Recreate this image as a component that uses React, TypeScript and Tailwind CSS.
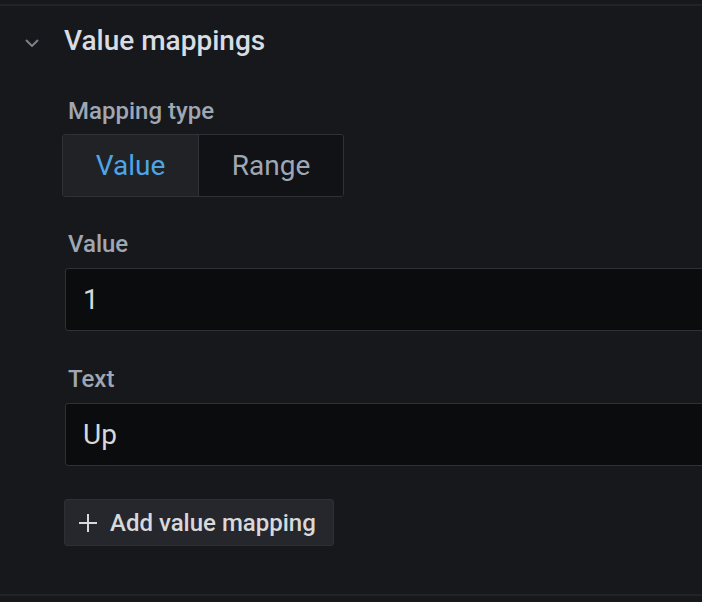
const font = { fontFamily: "Roboto, 'Noto Sans', Arial, sans-serif" };

function Field({ label, value }: { label: string; value: string }) {
  return (
    <div className="flex flex-col">
      <div className="pl-[3px] text-[24px] leading-[28px] font-medium text-[#9fa7b3]">{label}</div>
      <div className="mt-[10px] w-[700px] h-[63px] flex items-center pl-[17px] bg-[#0b0c0e] border border-[#2c3235] rounded-l-[3px] text-[28px] text-[#d8d9da]">
        {value}
      </div>
    </div>
  );
}

export default function App() {
  return (
    <div className="h-[602px] w-full bg-[#17181c] overflow-hidden flex flex-col" style={font}>
      <div className="h-[4px] shrink-0" />
      <div className="h-[2px] shrink-0 bg-[#222327]" />

      {/* header */}
      <div className="flex items-center pt-[19px] pl-[25px]">
        <svg width="14" height="8" viewBox="0 0 14 8" className="shrink-0 mt-[4px]">
          <path d="M1 1l6 6 6-6" fill="none" stroke="#7b8087" strokeWidth="2" />
        </svg>
        <div className="ml-[25px] text-[28px] leading-[32px] font-medium text-[#d8dce3]">Value mappings</div>
      </div>

      <div className="flex flex-col pl-[62px]">
        <div className="mt-[40px] pl-[6px] text-[24px] leading-[28px] font-medium text-[#9fa7b3]">Mapping type</div>
        <div className="mt-[9px] flex w-fit h-[63px] border border-[#2c3235] rounded-[3px] overflow-hidden text-[28px]">
          <div className="w-[135px] flex items-center justify-center bg-[#202226] text-[#4ea5e6]">Value</div>
          <div className="w-[145px] flex items-center justify-center bg-[#111216] border-l border-[#2c3235] text-[#9fa7b3]">Range</div>
        </div>

        <div className="mt-[33px] ml-[3px]">
          <Field label="Value" value="1" />
        </div>
        <div className="mt-[34px] ml-[3px]">
          <Field label="Text" value="Up" />
        </div>

        <div className="mt-[33px] ml-[2px]">
          <button className="h-[47px] flex items-center pl-[13px] pr-[17px] bg-[#25272c] border border-[#2c2f34] rounded-[3px] text-[24px] font-medium text-[#d8d9da]">
            <svg width="20" height="20" viewBox="0 0 20 20" className="shrink-0">
              <path d="M10 1v18M1 10h18" fill="none" stroke="#d8d9da" strokeWidth="2" />
            </svg>
            <span className="ml-[12px]">Add value mapping</span>
          </button>
        </div>
      </div>

      <div className="mt-auto mb-[6px] h-[2px] shrink-0 bg-[#222327]" />
    </div>
  );
}
